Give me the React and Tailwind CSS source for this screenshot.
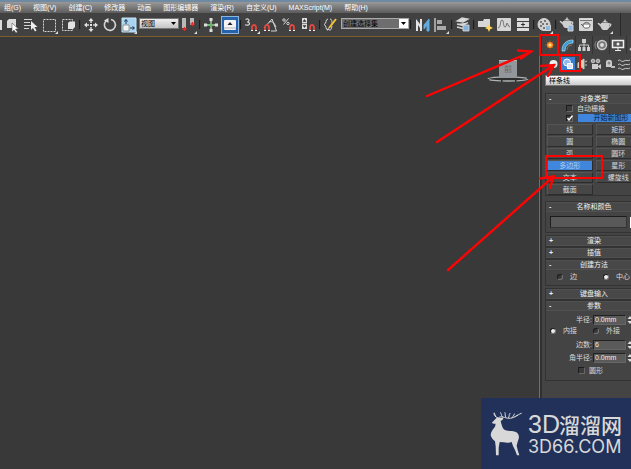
import React from 'react';

const menus = ['组(G)', '视图(V)', '创建(C)', '修改器', '动画', '图形编辑器', '渲染(R)', '自定义(U)', 'MAXScript(M)', '帮助(H)'];

const shapes = ['线', '矩形', '圆', '椭圆', '弧', '圆环', '多边形', '星形', '文本', '螺旋线', '截面'];

function Tool({ label, children, active }) {
  return (
    <button
      aria-label={label}
      className={`flex h-[18px] w-[18px] shrink-0 items-center justify-center ${active ? 'border border-[#8fb4dc] bg-[#2563ad]' : ''}`}
    >
      <svg className="h-[18px] w-[18px] shrink-0" viewBox="0 0 18 18" fill="none" stroke="#d4d4d4">
        {children}
      </svg>
    </button>
  );
}

function Sep() {
  return <span className="h-[9px] w-[2px] shrink-0 border-l border-[#1c1c1c] bg-[#3b3b3b]" />;
}

function Flyout() {
  return <path d="M17 15v3h-3z" fill="#ddd" stroke="none" />;
}

function Magnet({ x = 9, y = 9 }) {
  return (
    <g transform={`translate(${x} ${y})`}>
      <path d="M1 6V3a2 2 0 0 1 4 0v3" stroke="#e04a40" strokeWidth="1.8" />
      <path d="M0 6.5h2M4 6.5h2" stroke="#eee" strokeWidth="1.2" />
    </g>
  );
}

function Teapot() {
  return (
    <g fill="#cfcfcf" stroke="none">
      <path d="M5 7h8c1 3 0 6-2 7H7C5 13 4 10 5 7zM6 6.500c1-2 5-2 6 0zM8.300 3.500h1.400v1.500H8.300z" />
      <path d="M5 11 1.500 7.500l1-.8L6 9zM12.500 7.500c4-1 4 3.500-.5 4.500v-1c2.500-.8 2.700-2.800.5-2.500z" />
    </g>
  );
}

function MenuBar() {
  return (
    <nav className="flex h-[13px] shrink-0 items-center gap-[12px] overflow-hidden border-t-2 border-[#6f8aa3] bg-linear-to-b from-[#999] to-[#5c5c5c] pl-1 text-[7px] leading-[11px] whitespace-nowrap text-white">
      {menus.map((name) => (
        <button key={name} className="shrink-0">{name}</button>
      ))}
    </nav>
  );
}

function Toolbar() {
  return (
    <div className="flex h-[23px] shrink-0 items-center gap-px overflow-hidden bg-[#414141]">
      <span className="h-[10px] w-[2px] shrink-0 bg-[#ddd]" />
      <Tool label="选择对象">
        <path d="M4 5l2-2h7v7l-2 2H4z" fill="#dcdcdc" stroke="none" />
        <path d="M9 7v9l2-2 2 3 1.500-1-2-3h3z" fill="#fff" stroke="#444" strokeWidth=".5" />
      </Tool>
      <Tool label="按名称选择">
        <path d="M2 3.500h8M2 6.500h6M2 9.500h7M2 12.500h5" />
        <path d="M9 5v9l2-2 2 3.500 1.500-1-2-3.500h3z" fill="#eee" stroke="none" />
      </Tool>
      <Tool label="矩形选择区域">
        <path d="M2.500 3.500h12v12h-12z" strokeDasharray="2 1" />
        <Flyout />
      </Tool>
      <Tool label="窗口/交叉">
        <path d="M2.500 3.500h10v11h-10z" strokeDasharray="2 1" />
        <path d="M8 7l1.500-1.500H15V11l-2 2H8z" fill="#e2e2e2" stroke="none" />
      </Tool>
      <Sep />
      <Tool label="移动">
        <path d="M4 9h3m4 0h3M9 4v3m0 4v3" strokeWidth="1.500" />
        <path d="M9 2l2.500 3h-5zM9 16l2.500-3h-5zM2 9l3-2.500v5zM16 9l-3-2.500v5zM8 8h2v2H8z" fill="#e4e4e4" stroke="none" />
      </Tool>
      <Tool label="旋转">
        <path d="M5 5a5.500 5.500 0 1 0 5-1.500" strokeWidth="1.600" />
        <path d="M3 4.500 7.500 2v5z" fill="#ddd" stroke="none" />
      </Tool>
      <Tool label="缩放">
        <path d="M2 2h14v14H2z" fill="#a9d3ee" stroke="#c6e5f7" />
        <path d="M3 9h6v6H3z" fill="#f4f4f4" stroke="#666" strokeWidth=".6" />
        <path d="M6 8V4M4.500 5.500 6 3.500l1.500 2M10 12h4m-1.500-1.500 2 1.500-2 1.500" stroke="#17334d" />
        <Flyout />
      </Tool>
      <span className="relative mb-[3px] flex shrink-0">
        <select aria-label="参考坐标系" className="h-[11px] w-[40px] appearance-none border border-[#777] bg-linear-to-b from-[#eee] to-[#c5c5c5] pl-px text-[7px] leading-[9px] text-black">
          <option>视图</option>
        </select>
        <svg className="pointer-events-none absolute top-1 right-[3px] h-[3px] w-[5px]" viewBox="0 0 5 3"><path d="M0 0h5L2.500 3z" /></svg>
      </span>
      <Tool label="使用轴点中心">
        <path d="M2 2h4v10H2zM10 2h4v7h-4z" fill="#b9b9b9" stroke="none" />
        <path d="M4.500 11v4M2.500 13h4M12.500 6v4M10.500 8h4" stroke="#e03030" strokeWidth="1.300" />
        <Flyout />
      </Tool>
      <Sep />
      <Tool label="选择并操纵">
        <path d="M9 3v13M3 9h12" strokeWidth="1.300" />
        <path d="M9 6v6M6 9h6" stroke="#43b649" />
        <path d="M7.500 2h3v3h-3zM2 7.500h3v3H2zM13 7.500h3v3h-3zM7.500 13h3v3h-3z" fill="#ddd" stroke="none" />
      </Tool>
      <Tool label="键盘快捷键覆盖" active>
        <rect x="3" y="4" width="12" height="10" rx="1" fill="#f4f4f4" stroke="none" />
        <path d="M9 6l2.500 3h-5z" fill="#222" stroke="none" />
        <path d="M3 12h12" stroke="#999" strokeWidth=".7" />
      </Tool>
      <Sep />
      <Tool label="捕捉开关">
        <path d="M2.500 3.500c2-1 3.500-.5 3.500 1S5 6 4 6c1.500 0 2.500.5 2.500 1.800S4 9.500 2 8.800" strokeWidth="1.200" />
        <Magnet x={8} y={8} />
        <Flyout />
      </Tool>
      <Tool label="角度捕捉">
        <path d="M2 12 10 3l4.500 12H9M7 6c3-1 5 0 7 5" />
        <Magnet x={2} y={8} />
      </Tool>
      <Tool label="百分比捕捉">
        <path d="M2.500 8.500l5-6" /><circle cx="3" cy="4" r="1.200" /><circle cx="7" cy="7.500" r="1.200" />
        <Magnet x={8} y={8} />
      </Tool>
      <Tool label="微调器捕捉">
        <path d="M2 2h5v11H2z" fill="#ddd" stroke="none" />
        <path d="M4.500 3.500l1.500 2H3zM4.500 11.500l1.500-2H3zM2 7.500h5" fill="#333" stroke="#333" strokeWidth=".5" />
        <Magnet x={9} y={8} />
      </Tool>
      <Sep />
      <Tool label="编辑命名选择集">
        <path d="M6 3C3 3 5 8 2 8.500 5 9 3 14 6 14M8 3c3 0 1 5 3 5.500M7 14c3 0 2-1 3-4" />
        <path d="M7 12l7-9" stroke="#f2c230" strokeWidth="2" />
        <path d="M5 14.500l1-2.500 1.500 1.200z" fill="#eee" stroke="none" />
      </Tool>
      <span className="relative mb-[3px] flex shrink-0">
        <select aria-label="命名选择集" className="h-[11px] w-[68px] appearance-none border border-[#aaa] bg-[#6e6e6e] pl-px text-[7px] leading-[9px] text-black">
          <option>创建选择集</option>
        </select>
        <svg className="pointer-events-none absolute top-px right-px h-[9px] w-[9px] bg-white" viewBox="0 0 9 9"><path d="M2 3h5L4.500 6z" /></svg>
      </span>
      <Sep />
      <Tool label="镜像">
        <path d="M3 3l4 5V3h2v12H7v-3L5 9v6H3z" fill="#e4e4e4" stroke="none" />
        <path d="M16 3v12h-2V9l-3 4V9z" fill="#61aadf" stroke="#61aadf" />
      </Tool>
      <Tool label="对齐">
        <path d="M3 2v14" strokeWidth="1.300" />
        <path d="M5 4h5v4H5zM5 10h9v4H5z" fill="#aaa" stroke="none" />
        <Flyout />
      </Tool>
      <Sep />
      <Tool label="层管理器">
        <path d="M3 5l5-3 6 1-5 3zM3 8l6 1.500 5-3M3 11l6 1.500" fill="#ddd" strokeWidth="1.300" />
        <path d="M9 9h6v6H9z" fill="#86b2da" stroke="#ddd" strokeWidth=".8" />
      </Tool>
      <Sep />
      <Tool label="石墨工具">
        <path d="M2 5h5l1-2h6v8H2z" fill="#d7d7d7" stroke="none" />
        <path d="M13 8l1.200 2.500L17 12l-2.800 1.200L13 16l-1.200-2.800L9 12l2.800-1.500z" fill="#ffd65a" stroke="none" />
      </Tool>
      <Tool label="曲线编辑器">
        <path d="M2.500 2.500h13v12h-13z" fill="#d6d6d6" />
        <path d="M3 12c3 0 2-8 4-8s1 7 3 7 1-4 2-4 1 4 3 4" stroke="#555" strokeWidth=".8" />
      </Tool>
      <Tool label="图解视图">
        <path d="M3 2h12v3H3zM3 12h12v3H3zM3 6h12v5H3z" fill="#ddd" stroke="none" />
        <path d="M9 6.500v4M7 8.500h4" stroke="#333" />
      </Tool>
      <Sep />
      <Tool label="材质编辑器">
        <circle cx="8" cy="8.500" r="6" fill="#d2d2d2" />
        <path d="M4 5h2v2H4zM8 4h2v2H8zM6 7h2v2H6zM10 7h2v2h-2zM4 9h2v2H4zM7 11h2v2H7z" fill="#777" stroke="none" />
        <path d="M9.500 9.500h5v5h-5z" fill="#8fb9df" />
        <Flyout />
      </Tool>
      <Sep />
      <Tool label="渲染设置">
        <g transform="translate(0 -2)"><Teapot /></g>
        <path d="M10 9h5v6h-5z" fill="#8fb9df" />
      </Tool>
      <Tool label="渲染帧窗口">
        <path d="M2.500 2.500h13v12h-13z" fill="#d8d8d8" />
        <path d="M3 4.500h12" stroke="#777" />
        <path d="M6 8h7c0 3-1 4-2 4H8c-1 0-2-1-2-4zM6 10 4 8M7 7.500c1-1.500 4-1.500 5 0" stroke="#444" fill="#fff" strokeWidth=".8" />
      </Tool>
      <Tool label="渲染产品">
        <Teapot />
        <Flyout />
      </Tool>
      <span className="ml-[5px] h-full w-px shrink-0 bg-[#2a2a2a]" />
    </div>
  );
}

function ViewCube() {
  return (
    <svg className="h-[26px] w-[42px]" viewBox="0 0 42 26">
      <ellipse cx="21" cy="20" rx="20" ry="2" fill="#2e2e2e" stroke="#b0b4b4" strokeWidth="1.300" strokeDasharray="12 1.500" />
      <path d="M12 1h18v18H12z" fill="#93979b" />
      <path d="M12 1h18v1H12z" fill="#b5b8ba" />
      <text x="21" y="13" textAnchor="middle" fontSize="8" fill="#62666a">前</text>
    </svg>
  );
}

function PanelIcon({ label, small, active, children }) {
  return (
    <button
      aria-label={label}
      className={`flex shrink-0 items-center justify-center ${small ? 'h-[14px] w-[14px]' : 'h-[18px] w-[17px] border-r border-[#333]'} ${active ? 'bg-[#3b7dd0]' : ''}`}
    >
      <svg className="h-[14px] w-[14px] shrink-0" viewBox="0 0 14 14" fill="none" stroke="#c8c8c8">{children}</svg>
    </button>
  );
}

function Rollup({ title, open, className = '', children }) {
  return (
    <section className={`border border-[#333] bg-[#444] ${className}`}>
      <button className="relative block h-[10px] w-full border-y border-[#505050] bg-[#484848] text-center leading-[8px] text-[#f0f0f0]">
        <span className="absolute left-[3px] font-bold">{open ? '-' : '+'}</span>
        {title}
      </button>
      {children}
    </section>
  );
}

function Radio({ name, label, checked }) {
  return (
    <label className="flex items-center gap-[7px]">
      <input type="radio" name={name} defaultChecked={checked} className="h-[6px] w-[6px] appearance-none rounded-full border border-t-[#1c1c1c] border-r-[#777] border-b-[#777] border-l-[#1c1c1c] bg-[#383838] checked:bg-[#f0f0f0]" />
      {label}
    </label>
  );
}

function Check({ label, checked }) {
  return (
    <label className="relative flex items-center gap-[4px]">
      <input type="checkbox" aria-label={label || '开始新图形'} defaultChecked={checked} className="h-[7px] w-[7px] appearance-none border border-t-[#1c1c1c] border-r-[#666] border-b-[#666] border-l-[#1c1c1c] bg-[#3b3b3b]" />
      {checked && (
        <svg className="pointer-events-none absolute left-px h-[6px] w-[6px]" viewBox="0 0 6 6" fill="none" stroke="#fff" strokeWidth="1.400"><path d="M.5 3 2 5l3.500-4.500" /></svg>
      )}
      {label}
    </label>
  );
}

function Field({ label, value }) {
  return (
    <label className="flex h-[13px] items-center pl-[4px]">
      <span className="w-[43px] pr-px text-right">{label}:</span>
      <input defaultValue={value} className="h-[10px] w-[33px] border border-t-[#222] border-r-[#666] border-b-[#666] border-l-[#222] bg-[#5a5a5a] pl-px text-[7px] leading-[8px] text-[#eee]" />
      <svg className="ml-px h-[8px] w-[6px]" viewBox="0 0 6 8" fill="#ddd"><path d="M3 0l2.500 3h-5zM3 8 .5 5h5z" /></svg>
    </label>
  );
}

function CommandPanel() {
  return (
    <aside className="w-[92px] shrink-0 overflow-hidden border-l border-[#86702a] bg-[#444] text-[7px] leading-[9px] whitespace-nowrap text-[#d8d8d8]">
      <div className="flex h-full w-[104px] flex-col border-l-2 border-[#303030]">
        <div className="flex">
          <PanelIcon label="创建">
            <path d="M7 2v10M2 7h10M3.500 3.500l7 7M10.500 3.500l-7 7" stroke="#9b4e20" />
            <circle cx="7" cy="7" r="3" fill="#ff8a1f" stroke="none" />
            <circle cx="7" cy="7" r="1.500" fill="#ffe680" stroke="none" />
          </PanelIcon>
          <PanelIcon label="修改">
            <path d="M2 13C2 6 6 2 13 2v3C8 5 5 8 5 13z" fill="#3c9bd4" stroke="#b6def2" strokeWidth=".7" />
            <path d="M7 12C7 9 9 7 12 7" stroke="#777" />
          </PanelIcon>
          <PanelIcon label="层次">
            <path d="M5 1h4v4H5zM1 9h3v4H1zM5.500 9h3v4h-3zM10 9h3v4h-3z" fill="#ccc" stroke="none" />
            <path d="M7 5v4M2.500 9V7h9v2" />
          </PanelIcon>
          <PanelIcon label="运动">
            <circle cx="8" cy="7" r="4.500" fill="#777" strokeWidth="1.500" />
            <circle cx="8" cy="7" r="1.700" fill="#ddd" />
            <path d="M2.500 3c-2 2-2 6 0 8" stroke="#888" />
          </PanelIcon>
          <PanelIcon label="显示">
            <path d="M1.500 2.500h11v7h-11z" fill="#555" stroke="#f0f0f0" strokeWidth="1.500" />
            <path d="M4 12.500h6M7 10v2" stroke="#eee" /><circle cx="7" cy="6" r="1.500" fill="#eee" stroke="none" />
          </PanelIcon>
          <PanelIcon label="工具"><path d="M2 12 9 5" strokeWidth="2" /></PanelIcon>
        </div>
        <div className="flex pt-[3px] pl-[5px]">
          <PanelIcon label="几何体" small><circle cx="6.500" cy="7" r="4" fill="#eee" stroke="none" /></PanelIcon>
          <PanelIcon label="图形" small active>
            <circle cx="6" cy="5.500" r="3.500" fill="#90b8e8" stroke="#fff" />
            <path d="M6.500 6.500h5v5h-5z" fill="#d9e8fa" stroke="#fff" />
          </PanelIcon>
          <PanelIcon label="灯光" small><path d="M3 6l6-4v10L5 9l-2 2zM10 5l2-1M10 8h2" fill="#d7d5b0" /></PanelIcon>
          <PanelIcon label="摄影机" small>
            <path d="M3 7h6v5H3zM9 9l3-2v5l-3-2" fill="#ccc" stroke="none" />
            <circle cx="4" cy="4" r="1.800" fill="#999" /><circle cx="9" cy="4" r="1.800" fill="#999" />
          </PanelIcon>
          <PanelIcon label="辅助对象" small>
            <path d="M3 10V5c0-3 6-3 6 0v5z" fill="#ccc" stroke="none" />
            <circle cx="6" cy="6" r="1.500" fill="#888" stroke="none" /><path d="M8 9h4v2H8z" fill="#bbb" stroke="none" />
          </PanelIcon>
          <PanelIcon label="空间扭曲" small><path d="M1 4c2-3 3 2 6 0s3 1 6-1M1 8c2-3 3 2 6 0s3 1 6-1M1 12c2-3 3 2 6 0s3 1 6-1" /></PanelIcon>
        </div>
        <div className="pt-1 pl-[3px]">
          <select aria-label="类别" className="block h-[11px] w-[98px] appearance-none border border-[#777] bg-linear-to-b from-white to-[#ccc] pl-[3px] text-[7px] leading-[9px] text-black">
            <option>样条线</option>
          </select>
          <div className="w-[98px] pt-[7px]">
            <Rollup title="对象类型" open>
              <div className="pl-[20px]">
                <Check label="自动栅格" />
              </div>
              <div className="flex h-[10px] items-center gap-[5px] pl-[20px]">
                <Check checked />
                <button className="h-[8px] grow bg-[#3f86dc] pl-[2px] leading-[8px] text-[#0c1b33]">开始新图形</button>
              </div>
              <div className="grid grid-cols-2 gap-x-[3px] gap-y-px px-px pt-px">
                {shapes.map((s) => (
                  <button
                    key={s}
                    className={`h-[11px] border border-t-[#555] border-r-[#2c2c2c] border-b-[#2c2c2c] border-l-[#555] leading-[9px] ${s === '多边形' ? 'bg-[#3f86dc] text-[#b4cdec]' : 'bg-[#474747]'}`}
                  >
                    {s}
                  </button>
                ))}
              </div>
            </Rollup>
            <Rollup title="名称和颜色" open className="mt-[5px]">
              <div className="flex items-center gap-[3px] py-1 pl-[4px]">
                <input aria-label="名称" className="h-[12px] w-[77px] border border-t-[#1c1c1c] border-r-[#333] border-b-[#333] border-l-[#1c1c1c] bg-[#595959]" />
                <button aria-label="颜色" className="h-[11px] w-[9px] bg-white" />
              </div>
            </Rollup>
            <Rollup title="渲染" className="mt-[2px]" />
            <Rollup title="插值" />
            <Rollup title="创建方法" open>
              <div className="flex gap-[26px] pt-[2px] pb-[4px] pl-[11px]">
                <Radio name="method" label="边" />
                <Radio name="method" label="中心" checked />
              </div>
            </Rollup>
            <Rollup title="键盘输入" className="mt-[2px]" />
            <Rollup title="参数" open>
              <div className="pt-[2px] pb-[5px]">
                <Field label="半径" value="0.0mm" />
                <div className="flex gap-[16px] pl-[4px]">
                  <Radio name="fit" label="内接" checked />
                  <Radio name="fit" label="外接" />
                </div>
                <div className="pt-[3px]">
                  <Field label="边数" value="6" />
                  <Field label="角半径" value="0.0mm" />
                </div>
                <div className="pt-[2px] pl-[32px]">
                  <Check label="圆形" />
                </div>
              </div>
            </Rollup>
          </div>
        </div>
      </div>
    </aside>
  );
}

function Arrows() {
  return (
    <svg className="pointer-events-none absolute top-0 right-0 h-[469px] w-[631px]" viewBox="0 0 631 469" fill="none" stroke="#fb0404" strokeWidth="2.400" strokeLinecap="round">
      <path d="M427 96 531 52M518 50.500l13 1-10 7" />
      <path d="M437 142 554 65M541 66l13-1-6 11" />
      <path d="M448 270 553 177M540 178.500l13.500-2L550 188" />
      <path d="M540 35h18v20h-18zM560 55h20v16h-20zM546 156h56v22h-56z" strokeWidth="2" />
    </svg>
  );
}

function Watermark() {
  return (
    <div className="absolute right-0 bottom-0 flex h-[71px] w-[150px] items-center bg-[#213159] pl-[8px] text-[#d8d8d8]">
      <svg className="h-[46px] w-[34px] shrink-0" viewBox="13 34 102 138" fill="#d8d8d8">
        <path d="M21 70l9-10 8-7 8 2 11-2-3 7-6 4 2 8c3 10 5 17 13 20 10 3 22 1 31 5 8 4 10 13 8 20l-4 13-2 8 3 13 5 16h-7l-6-16-6-12-4-12c-8 3-17 3-24 1l-12-1-3 17v23h-8l-1-27-2-15c-6-5-12-12-13-19 0-10 8-18 13-25l2-9c-4 1-9 0-11-2z" />
        <path d="M38 54c-8-2-6-8-11-11M33 51l-4-11M43 53c10-5 17 2 29 3 15 1 24-10 38-15M53 51c-4-4-2-7-5-12M63 52c-3-5 0-7-2-13M71 55c5-5 0-8 5-14M82 54c3-4 6-6 7-11M91 52c2-3 5-4 8-5" fill="none" stroke="#d8d8d8" strokeWidth="3" strokeLinecap="round" />
      </svg>
      <div className="pt-1 pl-[5px] font-[Inter] whitespace-nowrap">
        <div className="flex h-[23px] items-center leading-[23px]">
          <span className="w-[31px] font-['Liberation_Sans'] text-[25px]">3D</span>
          <span className="font-['Noto_Sans_CJK_SC'] text-[21px] font-medium">溜溜网</span>
        </div>
        <div className="text-[18px] leading-[22px]">3D66.COM</div>
      </div>
    </div>
  );
}

export default function App() {
  return (
    <div className="relative flex min-h-screen flex-col overflow-hidden bg-[#393939] font-['Liberation_Sans','Noto_Sans_CJK_SC',sans-serif]">
      <MenuBar />
      <Toolbar />
      <div className="flex grow">
        <main className="flex grow items-start justify-end border-t border-[#7a5f28] pt-[22px] pr-[10px]">
          <ViewCube />
        </main>
        <CommandPanel />
      </div>
      <Arrows />
      <Watermark />
    </div>
  );
}
